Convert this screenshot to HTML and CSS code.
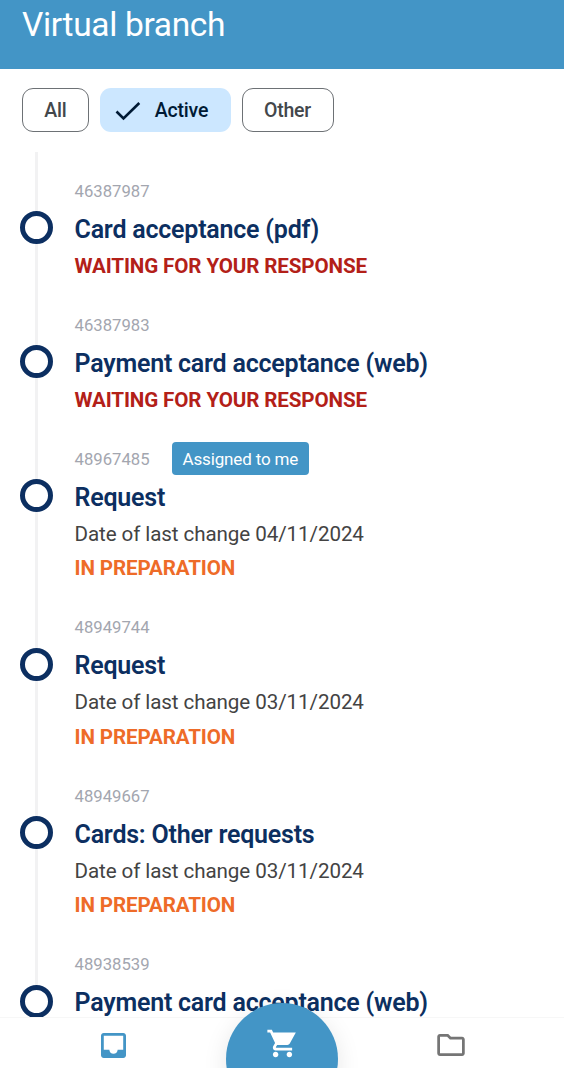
FILE: index.html
```html
<!DOCTYPE html>
<html lang="en">
<head>
<meta charset="utf-8">
<title>Virtual branch</title>
<link rel="stylesheet" href="styles.css">
</head>
<body>
<div class="app">
  <header class="header"><h1>Virtual branch</h1></header>
  <div class="filters">
    <button class="chip chip-all">All</button>
    <button class="chip chip-active">
      <svg class="check" viewBox="0 0 26 20" width="26" height="20"><path d="M1.500 10.500 8.500 17.500 24.300 2" fill="none" stroke="currentColor" stroke-width="2.600"/></svg>
      <span>Active</span>
    </button>
    <button class="chip chip-other">Other</button>
  </div>
  <main class="timeline">
    <article class="item">
      <div class="meta"><span class="number">46387987</span></div>
      <h2><i class="dot"></i><span>Card acceptance (pdf)</span></h2>
      <p class="status waiting">WAITING FOR YOUR RESPONSE</p>
    </article>
    <article class="item">
      <div class="meta"><span class="number">46387983</span></div>
      <h2><i class="dot"></i><span>Payment card acceptance (web)</span></h2>
      <p class="status waiting">WAITING FOR YOUR RESPONSE</p>
    </article>
    <article class="item">
      <div class="meta"><span class="number">48967485</span><span class="tag">Assigned to me</span></div>
      <h2><i class="dot"></i><span>Request</span></h2>
      <p class="date">Date of last change 04/11/2024</p>
      <p class="status preparing">IN PREPARATION</p>
    </article>
    <article class="item">
      <div class="meta"><span class="number">48949744</span></div>
      <h2><i class="dot"></i><span>Request</span></h2>
      <p class="date">Date of last change 03/11/2024</p>
      <p class="status preparing">IN PREPARATION</p>
    </article>
    <article class="item">
      <div class="meta"><span class="number">48949667</span></div>
      <h2><i class="dot"></i><span>Cards: Other requests</span></h2>
      <p class="date">Date of last change 03/11/2024</p>
      <p class="status preparing">IN PREPARATION</p>
    </article>
    <article class="item">
      <div class="meta"><span class="number">48938539</span></div>
      <h2><i class="dot"></i><span>Payment card acceptance (web)</span></h2>
    </article>
  </main>
  <nav class="tabbar">
    <a class="tab inbox"><svg viewBox="3 3 18 18" width="25" height="25"><path fill="currentColor" d="M19 3H5c-1.100 0-2 .9-2 2v14c0 1.100.9 2 2 2h14c1.100 0 2-.9 2-2V5c0-1.100-.9-2-2-2zm0 12h-4c0 1.660-1.350 3-3 3s-3-1.340-3-3H5V5h14v10z"/></svg></a>
    <a class="tab cart"><svg viewBox="0 0 24 24" width="33" height="33"><path fill="currentColor" d="M7 18c-1.100 0-1.990.9-1.990 2S5.900 22 7 22s2-.9 2-2-.9-2-2-2zM1 2v2h2l3.600 7.590-1.350 2.450c-.16.280-.25.610-.25.960 0 1.100.9 2 2 2h12v-2H7.420c-.14 0-.25-.11-.25-.25l.03-.12.900-1.630h7.450c.75 0 1.410-.41 1.750-1.030L21.700 4H5.210l-.94-2H1zm16 16c-1.100 0-1.990.9-1.990 2s.89 2 1.990 2 2-.9 2-2-.9-2-2-2z"/></svg></a>
    <a class="tab folder"><svg viewBox="2 4 20 16" width="28" height="22"><path fill="currentColor" d="M9.170 6l2 2H20v10H4V6h5.170M10 4H4c-1.100 0-1.990.9-1.990 2L2 18c0 1.100.9 2 2 2h16c1.100 0 2-.9 2-2V8c0-1.100-.9-2-2-2h-8l-2-2z"/></svg></a>
  </nav>
</div>
</body>
</html>
```
FILE: styles.css
```css
* { box-sizing: border-box; }
body { margin: 0; background: #fff; font-family: Roboto, "Liberation Sans", sans-serif; }
h1, h2, p { margin: 0; }
.app { position: relative; height: 1068px; overflow: hidden; display: flex; flex-direction: column; }
.header { flex: none; height: 68.5px; padding: 5px 22px 0; background: #4395c6; color: #fff; }
.header h1 { font-size: 33.5px; font-weight: 400; line-height: 40px; letter-spacing: -0.35px; white-space: nowrap; }
.filters { flex: none; display: flex; gap: 11px; height: 83px; padding: 19.5px 22px 19.5px; }
.chip { display: flex; align-items: center; justify-content: center; height: 44px; padding: 2px 0 0; border: 1.500px solid #6d7175; border-radius: 11px; background: #fff; color: #43474b; font: 500 19.5px/24px Roboto, sans-serif; letter-spacing: -0.2px; }
.chip-all { width: 67px; }
.chip-active { width: 131px; padding-right: 8px; gap: 14px; border: 0; background: #cce7ff; color: #001a35; }
.chip-other { width: 92px; padding-right: 1px; }
.timeline { flex: none; padding: 23px 0 0 19.5px; background: linear-gradient(#f2f2f3, #f2f2f3) 34.5px 0 / 3px 850px no-repeat; }
.item { padding: 0 0 27px 55px; }
.meta { display: flex; align-items: center; height: 33px; gap: 22px; }
.number { padding-top: 1px; color: #a3a6af; font-size: 16.7px; line-height: 20px; }
.tag { height: 33px; margin-top: -1px; padding: 0 11px; border-radius: 4px; background: #4395c6; color: #fff; font-size: 17px; line-height: 34px; letter-spacing: -0.15px; white-space: nowrap; }
.item h2 { display: flex; align-items: center; height: 43px; margin-left: -55px; gap: 22px; color: #0c2f61; font-size: 25px; font-weight: 600; line-height: 43px; letter-spacing: -0.22px; white-space: nowrap; }
.dot { flex: none; width: 33px; height: 33px; margin-top: -3px; border: 5px solid #0c2f61; border-radius: 50%; background: #fff; }
.date { height: 31px; margin-bottom: 3.500px; color: #434343; font-size: 20.6px; line-height: 31px; letter-spacing: -0.09px; }
.status { height: 31px; font-size: 20.6px; font-weight: 700; line-height: 31px; letter-spacing: -0.13px; }
.waiting { color: #b32018; }
.preparing { color: #ee6b28; }
.tabbar { position: absolute; left: 0; right: 0; bottom: 0; height: 51px; display: grid; grid-template-columns: 226px 112px 226px; border-top: 1px solid #f7f7f7; background: #fff; }
.tab { display: flex; justify-content: center; align-items: flex-start; }
.inbox { padding-top: 15px; color: #4395c6; }
.folder { padding-top: 16px; color: #757575; }
.cart { width: 112px; height: 112px; margin-top: -15px; padding-top: 24px; border-radius: 50%; background: #4395c6; color: #fff; box-shadow: 0 6px 24px rgba(0, 0, 0, .1); }
```
